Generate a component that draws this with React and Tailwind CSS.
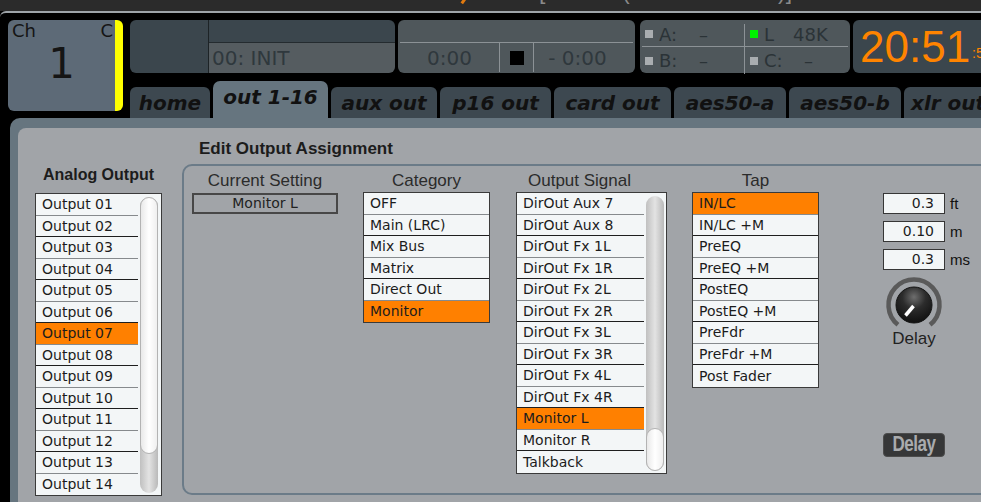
import clsx from 'clsx';

const analog = Array.from({ length: 14 }, (_, i) => `Output ${String(i + 1).padStart(2, '0')}`);
const category = ['OFF', 'Main (LRC)', 'Mix Bus', 'Matrix', 'Direct Out', 'Monitor'];
const signals = [
  'DirOut Aux 7', 'DirOut Aux 8', 'DirOut Fx 1L', 'DirOut Fx 1R', 'DirOut Fx 2L', 'DirOut Fx 2R',
  'DirOut Fx 3L', 'DirOut Fx 3R', 'DirOut Fx 4L', 'DirOut Fx 4R', 'Monitor L', 'Monitor R', 'Talkback',
];
const taps = ['IN/LC', 'IN/LC +M', 'PreEQ', 'PreEQ +M', 'PostEQ', 'PostEQ +M', 'PreFdr', 'PreFdr +M', 'Post Fader'];

const tabs = [
  { label: 'home', w: 'w-[80px] justify-center' },
  { label: 'out 1-16', w: 'w-[115px] justify-center', active: true },
  { label: 'aux out', w: 'w-[106px] justify-center' },
  { label: 'p16 out', w: 'w-[111px] justify-center' },
  { label: 'card out', w: 'w-[117px] justify-center' },
  { label: 'aes50-a', w: 'w-[112px] justify-center' },
  { label: 'aes50-b', w: 'w-[112px] justify-center' },
  { label: 'xlr out', w: 'w-[120px] justify-start pl-[7px]' },
];

const sans = "font-['Liberation_Sans',Arial,sans-serif]";

function Row({ label, sel, i, last }) {
  return (
    <div
      className={clsx(
        'h-[21.5px] flex items-center pl-[6px] pt-[1px] text-[14px] text-[#1c1c1c] whitespace-nowrap',
        sel ? 'bg-[#ff8000]' : 'bg-[#f3f6f7]',
        !last && (i % 2 === 0 ? 'border-b border-[#868a8d]' : 'border-b border-[#1e1e1e]')
      )}
    >
      {label}
    </div>
  );
}

function ScrollBar({ w, thumbH, atEnd }) {
  return (
    <div className={clsx('flex bg-[#f3f6f7] pl-[2px] pt-[3px] pb-[2px]', w)}>
      <div
        className={clsx(
          'w-[18px] flex flex-col rounded-full bg-linear-to-r from-[#c0c0c0] via-[#e3e3e3] to-[#b9b9b9]',
          atEnd ? 'justify-end' : 'justify-start'
        )}
      >
        <div className={clsx('rounded-full border border-[#b3b3b3] bg-linear-to-r from-[#e9e9e9] via-white to-[#efefef]', thumbH)} />
      </div>
    </div>
  );
}

function List({ items, sel, textW, scroll }) {
  return (
    <div className="flex border border-[#3a3a3a] bg-[#f3f6f7]">
      <div className={textW}>
        {items.map((t, i) => (
          <Row key={t} label={t} i={i} sel={t === sel} last={i === items.length - 1} />
        ))}
      </div>
      {scroll}
    </div>
  );
}

function Label({ children, className }) {
  return <div className={clsx('h-[20px] leading-[20px] pt-[1px] text-[17px] text-[#2b2b2b] text-center whitespace-nowrap', sans, className)}>{children}</div>;
}

function Knob() {
  return (
    <svg width="60" height="56" viewBox="0 0 60 56">
      <defs>
        <radialGradient id="kg" cx="50%" cy="28%" r="72%">
          <stop offset="0" stopColor="#6e6e6e" />
          <stop offset="0.45" stopColor="#2c2c2c" />
          <stop offset="1" stopColor="#101010" />
        </radialGradient>
      </defs>
      <path d="M 13.95 49.82 A 25.5 25.5 0 1 1 46.05 49.82" stroke="#5a5a5a" strokeWidth="4.5" fill="none" />
      <circle cx="30" cy="30" r="18" fill="url(#kg)" stroke="#141414" strokeWidth="1" />
      <line x1="29.5" y1="31" x2="21.5" y2="40.5" stroke="#ffffff" strokeWidth="3.5" />
    </svg>
  );
}

function Sq({ on }) {
  return <div className={clsx('w-[8px] h-[8px] shrink-0', on ? 'bg-[#00f000]' : 'bg-[#a9adb0]')} />;
}

export default function App() {
  return (
    <div className="w-[981px] h-[502px] overflow-hidden bg-black font-['DejaVu_Sans',sans-serif]">
      {/* title strip, text clipped at top */}
      <div className="h-[11px] bg-[#2b2b2b] overflow-hidden flex">
        <div className="ml-[462px] -mt-[2px] w-[3px] h-[6px] bg-[#e07a10] rotate-[35deg] shrink-0" />
        <div className={clsx('ml-[74px] -mt-[20px] text-[23px] leading-[23px] text-[#8a8a8a] whitespace-nowrap', sans)}>
          [Device (Not connected)]
        </div>
      </div>

      <div className="h-[491px] border-t-2 border-[#9ea4a9] rounded-tl-[6px] flex flex-col">
        {/* header */}
        <div className="flex pl-[8px] pt-[7px] shrink-0">
          <div className="w-[115px] h-[91px] rounded-[6px] overflow-hidden flex shrink-0">
            <div className="w-[107px] bg-[#5d6a77] flex flex-col text-[#151515]">
              <div className="flex justify-between pl-[4px] pr-[2px] pt-[2px] text-[18px] leading-[18px]">
                <span>Ch</span>
                <span>C</span>
              </div>
              <div className="mt-[2.5px] text-center text-[42px] leading-[42px]">1</div>
            </div>
            <div className="w-[8px] bg-[#ffff00] rounded-r-[3px]" />
          </div>

          <div className="ml-[7px] flex flex-col shrink-0">
            <div className="flex h-[53px]">
              <div className="w-[265px] rounded-[6px] overflow-hidden flex shrink-0">
                <div className="w-[79px] bg-[#3b464d] border-r border-[#1d2326]" />
                <div className="flex-1 flex flex-col">
                  <div className="h-[27px] bg-[#3b464d] border-b border-[#242b2f]" />
                  <div className="flex-1 bg-[#555c60] flex items-center pl-[3px] text-[20px] text-[#2f383d]">00: INIT</div>
                </div>
              </div>

              <div className="ml-[3px] w-[237px] rounded-[6px] bg-[#4f575b] flex flex-col px-[2px] shrink-0">
                <div className="h-[27px] border-b border-[#8c9296]" />
                <div className="flex-1 flex text-[20px] text-[#2f383d]">
                  <div className="w-[99px] flex items-center justify-center">0:00</div>
                  <div className="w-[35px] border-l border-r border-[#8c9296] mb-[1px] flex items-center justify-center">
                    <div className="w-[14px] h-[14px] bg-black" />
                  </div>
                  <div className="flex-1 flex items-center justify-center pr-[12px]">- 0:00</div>
                </div>
              </div>

              <div className="ml-[5px] w-[210px] rounded-[6px] bg-[#4f575b] flex flex-col px-[2px] text-[18px] text-[#2b3337] shrink-0">
                <div className="h-[27px] border-b border-[#8c9296] flex">
                  <div className="w-[103px] mt-[4px] border-r border-[#8c9296] flex items-center pl-[3px] pb-[2px]">
                    <Sq />
                    <span className="ml-[6px] w-[40px]">A:</span>
                    <span>–</span>
                  </div>
                  <div className="flex-1 flex items-center pl-[5px] pt-[2px]">
                    <Sq on />
                    <span className="ml-[6px] w-[29px]">L</span>
                    <span>48K</span>
                  </div>
                </div>
                <div className="flex-1 flex">
                  <div className="w-[103px] mb-[3px] border-r border-[#8c9296] flex items-center pl-[3px]">
                    <Sq />
                    <span className="ml-[6px] w-[40px]">B:</span>
                    <span>–</span>
                  </div>
                  <div className="flex-1 flex items-center pl-[5px] pb-[3px]">
                    <Sq />
                    <span className="ml-[6px] w-[40px]">C:</span>
                    <span>–</span>
                  </div>
                </div>
              </div>

              <div className={clsx('ml-[3px] w-[140px] rounded-[6px] bg-[#3b464d] flex items-center pl-[7px] text-[#ff8400] shrink-0', sans)}>
                <span className="text-[44px] leading-[44px]">20:51</span>
                <span className="text-[14px] mt-[14px] ml-[2px]">:5</span>
              </div>
            </div>

            <div className="mt-[8px] h-[37px] flex items-end gap-[3px]">
              {tabs.map((t) => (
                <div
                  key={t.label}
                  className={clsx(
                    'shrink-0 flex items-center font-bold italic text-[20px] text-[#111] whitespace-nowrap overflow-hidden',
                    t.w,
                    t.active ? 'h-[37px] bg-[#66757f] rounded-t-[7px] pb-[5px]' : 'h-[31px] bg-[#3d4850] rounded-t-[6px]'
                  )}
                >
                  {t.label}
                </div>
              ))}
            </div>
          </div>
        </div>

        {/* main panel */}
        <div className="flex-1 ml-[10px] bg-[#66757f] rounded-tl-[10px] pt-[10px] pl-[8px] flex">
          <div className="flex-1 bg-[#a1a4a8] rounded-tl-[8px] flex flex-col">
            <div className={clsx('pl-[181px] pt-[11px] h-[31px] leading-[20px] text-[17px] font-bold text-[#1c1c1c]', sans)}>
              Edit Output Assignment
            </div>

            <div className="mt-[5px] flex items-start">
              <div className="ml-[17px] w-[127px] shrink-0">
                <div className={clsx('h-[20px] leading-[20px] pt-[1px] text-[16px] font-bold text-[#1c1c1c] text-center', sans)}>Analog Output</div>
                <div className="mt-[9px]">
                  <List items={analog} sel="Output 07" textW="w-[102px]" scroll={<ScrollBar w="w-[23px]" thumbH="h-[257px]" />} />
                </div>
              </div>

              <div className="ml-[20px] w-[820px] h-[331px] shrink-0 border-2 border-[#6b7b88] rounded-[10px] flex pl-[8px] pt-[4px]">
                <div className="w-[146px] shrink-0">
                  <Label>Current Setting</Label>
                  <div className="mt-[3px] h-[21px] border-2 border-[#474747] flex items-center justify-center text-[14px] text-[#222]">
                    Monitor L
                  </div>
                </div>

                <div className="ml-[25px] w-[127px] shrink-0">
                  <Label>Category</Label>
                  <div className="mt-[2px]">
                    <List items={category} sel="Monitor" textW="w-[125px]" />
                  </div>
                </div>

                <div className="ml-[26px] w-[151px] shrink-0">
                  <Label className="pr-[24px]">Output Signal</Label>
                  <div className="mt-[2px]">
                    <List items={signals} sel="Monitor L" textW="w-[127px]" scroll={<ScrollBar w="w-[22px]" thumbH="h-[43px]" atEnd />} />
                  </div>
                </div>

                <div className="ml-[25px] w-[127px] shrink-0">
                  <Label>Tap</Label>
                  <div className="mt-[2px]">
                    <List items={taps} sel="IN/LC" textW="w-[125px]" />
                  </div>
                </div>

                <div className="ml-[64px] pt-[23px] shrink-0 flex flex-col">
                  {[['0.3', 'ft'], ['0.10', 'm'], ['0.3', 'ms']].map(([v, u], i) => (
                    <div key={u} className={clsx('flex items-center h-[21px]', i > 0 && 'mt-[7px]')}>
                      <div className="w-[62px] h-[21px] border border-[#363636] bg-[#f3f6f7] flex items-center justify-end pr-[10px] text-[14px] text-[#1c1c1c]">
                        {v}
                      </div>
                      <span className={clsx('ml-[5px] text-[15px] leading-[21px] text-[#111]', sans)}>{u}</span>
                    </div>
                  ))}
                  <div className="w-[62px] mt-[5px] flex justify-center">
                    <Knob />
                  </div>
                  <div className={clsx('w-[62px] h-[16px] leading-[16px] text-center text-[17px] text-[#222]', sans)}>Delay</div>
                  <div className={clsx('mt-[86px] w-[62px] h-[24px] rounded-[4px] bg-[#363738] border border-[#4c4c4c] flex items-center justify-center text-[#a9abad] font-bold text-[17px] tracking-[-0.5px]', sans)}>
                    <span className="inline-block scale-y-125">Delay</span>
                  </div>
                </div>
              </div>
            </div>
          </div>
        </div>
      </div>
    </div>
  );
}
